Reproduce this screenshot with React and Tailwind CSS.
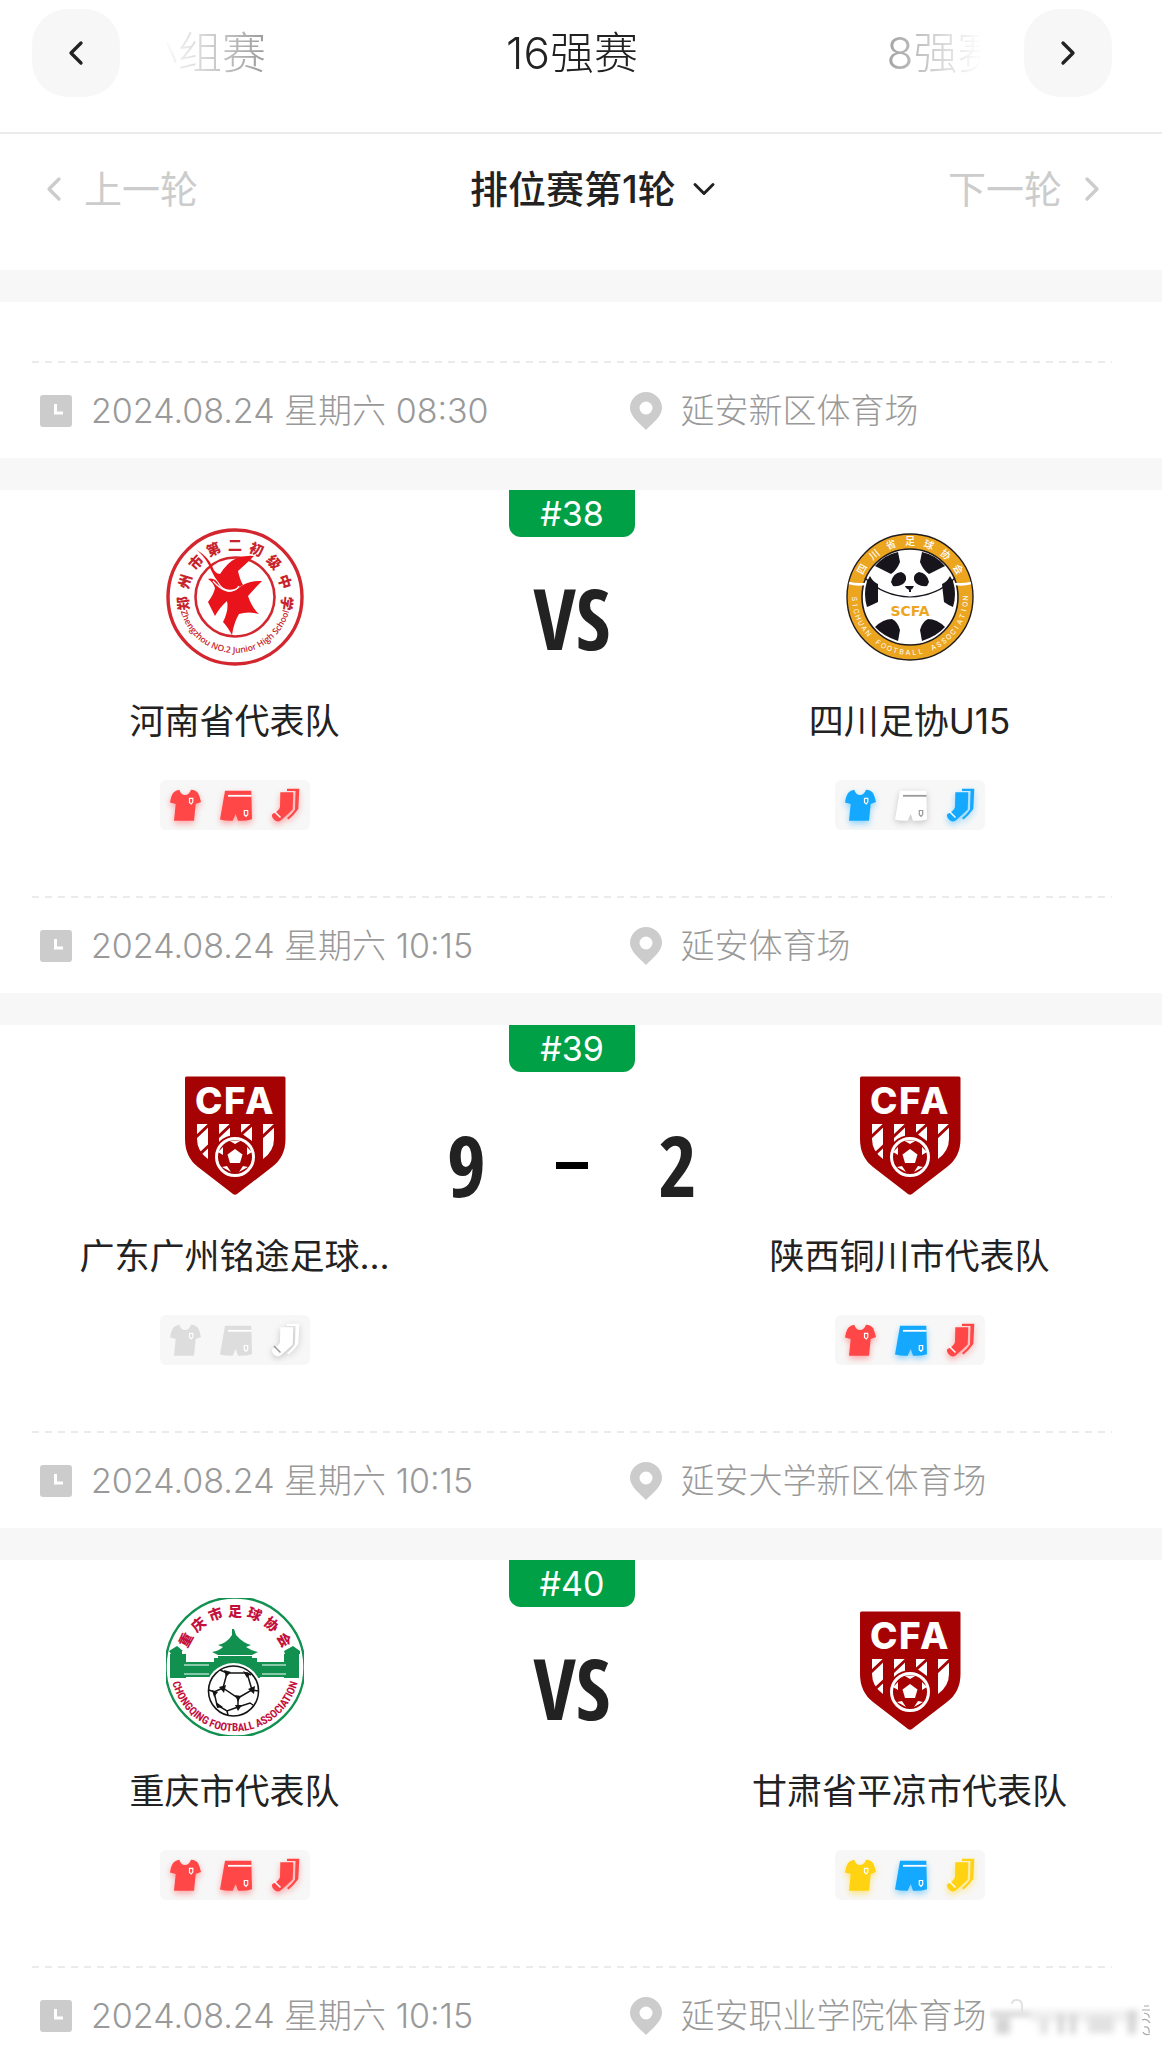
import React from 'react';
import { ChevronDown, ChevronLeft, ChevronRight } from 'lucide-react';

const KIT_COLORS = {
  red: { fill: '#ff4747', line: '#ffffff', shadow: 'drop-shadow-[0_3px_3px_rgba(255,71,71,0.45)]' },
  blue: { fill: '#14a9ff', line: '#ffffff', shadow: 'drop-shadow-[0_3px_3px_rgba(20,169,255,0.45)]' },
  yellow: { fill: '#ffd212', line: '#ffffff', shadow: 'drop-shadow-[0_3px_3px_rgba(255,210,18,0.5)]' },
  white: { fill: '#ffffff', line: '#9a9a9a', shadow: 'drop-shadow-[0_2px_3px_rgba(0,0,0,0.2)]' },
  gray: { fill: '#dddddd', line: '#ffffff', shadow: '' },
};

const MATCHES = [
  {
    no: '#38',
    home: { name: '河南省代表队', logo: 'henan', kit: ['red', 'red', 'red'] },
    away: { name: '四川足协U15', logo: 'sichuan', kit: ['blue', 'white', 'blue'] },
    time: '2024.08.24 星期六 10:15',
    venue: '延安体育场',
  },
  {
    no: '#39',
    home: { name: '广东广州铭途足球...', logo: 'cfa', kit: ['gray', 'gray', 'white'] },
    away: { name: '陕西铜川市代表队', logo: 'cfa', kit: ['red', 'blue', 'red'] },
    score: [9, 2],
    time: '2024.08.24 星期六 10:15',
    venue: '延安大学新区体育场',
  },
  {
    no: '#40',
    home: { name: '重庆市代表队', logo: 'chongqing', kit: ['red', 'red', 'red'] },
    away: { name: '甘肃省平凉市代表队', logo: 'cfa', kit: ['yellow', 'blue', 'yellow'] },
    time: '2024.08.24 星期六 10:15',
    venue: '延安职业学院体育场',
  },
];

// 沿圆弧逐字排列，bottom 表示文字在圆的下半部分
const ArcText = ({ text, radius, from, to, size, fill, weight = 400, bottom = false }) => {
  const chars = [...text];
  const step = (to - from) / (chars.length - 1);
  return chars.map((c, i) => (
    <text
      key={i}
      x="69"
      y={bottom ? 69 + radius : 69 - radius}
      transform={`rotate(${from + step * i} 69 69)`}
      textAnchor="middle"
      fontSize={size}
      fontWeight={weight}
      fill={fill}
    >
      {c}
    </text>
  ));
};

const HenanLogo = () => (
  <svg viewBox="0 0 138 138" className="size-full" role="img" aria-label="郑州市第二初级中学">
    <circle cx="69" cy="69" r="67" fill="#fff" stroke="#d3262e" strokeWidth="3.4" />
    <circle cx="69" cy="69" r="39.5" fill="none" stroke="#d3262e" strokeWidth="2.6" />
    <ArcText text="郑州市第二初级中学" radius={47} from={-97} to={97} size={14} weight={900} fill="#c8232b" />
    <path id="henan-arc" d="M13 69 A56 56 0 0 0 125 69" fill="none" />
    <text fontSize="8.6" fontWeight="600" fill="#c8232b" className="font-['Open_Sans',sans-serif]">
      <textPath href="#henan-arc" startOffset="50%" textAnchor="middle">Zhengzhou NO.2 Junior High School</textPath>
    </text>
    <g fill="#e8131b">
      <path d="M31 22 Q42 29 46 38 Q49 46 54 46 Q62 34 69 31 Q78 27 88 28 Q80 36 72 43 Q74 52 77 57 L69 61 Q58 64 53 55 Q48 49 45 42 Q41 31 31 22Z" />
      <path d="M42 51 Q49 49 53 57 Q60 67 70 62 Q81 52 96 53 Q88 61 82 68 Q86 80 93 86 Q82 83 73 86 Q68 94 66 107 Q61 98 57 94 Q63 82 61 73 Q54 79 49 88 Q45 80 42 74 Q48 66 49 60 Q47 54 42 51Z" />
    </g>
    <path d="M47 53 Q54 61 61 63 Q69 64 73 58" fill="none" stroke="#fff" strokeWidth="1.2" />
  </svg>
);

const SichuanLogo = () => (
  <svg viewBox="0 0 138 138" className="size-full" role="img" aria-label="四川省足球协会">
    <circle cx="69" cy="69" r="63" fill="#eca51f" stroke="#221c1c" strokeWidth="1.4" />
    <circle cx="69" cy="69" r="48" fill="#fff" stroke="#221c1c" strokeWidth="1.6" />
    <path d="M8 55 Q15 57 24 56 M130 55 Q123 57 114 56" fill="none" stroke="#fff" strokeWidth="2.6" />
    <ArcText text="四川省足球协会" radius={52} from={-60} to={60} size={10} weight={500} fill="#fff" />
    <ArcText text="SICHUAN" radius={58} from={88} to={49} size={7} fill="#fff" bottom />
    <ArcText text="FOOTBALL" radius={58} from={35} to={-11} size={7} fill="#fff" bottom />
    <ArcText text="ASSOCIATION" radius={58} from={-25} to={-89} size={7} fill="#fff" bottom />
    <g fill="#17141c">
      <path d="M34 38 Q43 27 57 24 L59 34 Q56 42 50 46Z" />
      <path d="M104 38 Q95 27 81 24 L79 34 Q82 42 88 46Z" />
      <path d="M26 53 Q28 50 29 48 Q32 54 37 56 L37 74 Q31 77 26 79 Q22 66 26 53Z" />
      <path d="M112 53 Q110 50 109 48 Q106 54 101 56 L103 74 Q107 77 112 79 Q116 66 112 53Z" />
      <path d="M34 99 Q42 91 51 91 Q57 94 59 102 L57 113 Q42 108 34 99Z" />
      <path d="M104 99 Q96 91 87 91 Q81 94 79 102 L81 113 Q96 108 104 99Z" />
      <path d="M50 54 Q52 45 60 44 Q66 46 65 52 Q62 59 52 58Z" />
      <path d="M88 54 Q86 45 78 44 Q72 46 73 52 Q76 59 86 58Z" />
      <path d="M64 58 H73 Q72 61 69 62 Q65 61 64 58Z M68 61 H70 V64 H68Z" />
    </g>
    <path d="M24 50 Q42 68 69 69 Q96 68 114 50" fill="none" stroke="#17141c" strokeWidth="1.2" />
    <text x="69" y="88" textAnchor="middle" fontSize="14" fontWeight="800" fill="#eca51f" className="font-['DejaVu_Sans',sans-serif]">
      SCFA
    </text>
  </svg>
);

const ChongqingLogo = () => (
  <svg viewBox="0 0 138 138" className="size-full" role="img" aria-label="重庆市足球协会">
    <circle cx="69" cy="69" r="69.5" fill="#fff" stroke="#119050" strokeWidth="2.4" />
    <ArcText text="重庆市足球协会" radius={51} from={-61} to={61} size={14} weight={900} fill="#c4103d" />
    <g fill="#119050">
      <path d="M66 31 H68 L70 37 Q77 45 85 47 L80 49 Q86 53 92 54 L86 57 V60 H52 V57 L46 54 Q53 53 57 49 L52 47 Q61 45 66 37Z" />
      <path d="M48 60 H91 V64 H94 V80 H45 V64 H48Z" />
      <path d="M11 48 L17 53 H16 V56 H20 V80 H4 V56 H5 L3 53Z" />
      <path d="M127 48 L134 53 V56 H133 V80 H118 V56 H119 L118 53Z" />
      <path d="M16 64 H46 V79 H16Z M92 64 H122 V79 H92Z" />
    </g>
    <path d="M18 67 H43 M18 76 H43 M96 67 H120 M96 76 H120 M50 57.5 H89" stroke="#fff" strokeWidth="1" />
    <circle cx="67.5" cy="93" r="28" fill="#fff" />
    <circle cx="67.5" cy="93" r="25" fill="#fff" stroke="#141414" strokeWidth="1.6" />
    <g fill="none" stroke="#141414" strokeWidth="1.5">
      <path d="M61 75 L81 75 L86 92 L72 100 L57 90Z" />
      <path d="M61 75 L54 72 M81 75 L85 77 M86 92 L92 93 M72 100 L72 109 M57 90 L48 94 L43 92" />
      <path d="M48 94 L51 107 L61 113 L72 109 L84 105 L87 107 M61 113 L62 117" />
    </g>
    <g fill="#141414">
      <path d="M58 72 L65 74 L60 79Z M77 73 L84 76 L81 80Z M82 91 L89 88 L88 96Z M69 97 L75 98 L72 104Z M53 89 L60 87 L58 95Z M46 92 L52 94 L48 99Z M50 104 L57 109 L51 110Z M69 107 L76 107 L72 113Z" />
    </g>
    <path id="cq-arc" d="M4.5 69 A64.5 64.5 0 0 0 133.5 69" fill="none" />
    <text fontSize="11" fontWeight="700" fill="#c4103d" className="font-['Liberation_Sans_Narrow','Roboto_Condensed','Liberation_Sans',sans-serif]">
      <textPath href="#cq-arc" startOffset="50%" textAnchor="middle">CHONGQING FOOTBALL ASSOCIATION</textPath>
    </text>
  </svg>
);

const CfaLogo = () => (
  <svg viewBox="0 0 138 138" className="size-full" role="img" aria-label="CFA">
    <path d="M20.5 13.5 H118 Q119.5 13.5 119.5 15 V76 Q119.5 94 106 104 L71 131 Q69 132.5 67 131 L32 104 Q19 94 19 76 V15 Q19 13.5 20.5 13.5Z" fill="#a50204" />
    <text x="29 58 79" y="51" fontSize="37" fontWeight="800" fill="#fff">CFA</text>
    <g fill="#fff">
      <path d="M31 61 H42 V96 Q31 88 31 76Z" />
      <path d="M53 61 H64 V74 L53 82Z" />
      <path d="M75 61 H86 V78 L75 70Z" />
      <path d="M97 61 H108 V76 Q108 88 97 96Z" />
    </g>
    <path d="M29 75 L48 57 M34 91 L70 57 M69 77 L91 57 M94 76 L112 59" stroke="#a50204" strokeWidth="3" />
    <circle cx="69" cy="94" r="22" fill="#a50204" />
    <circle cx="69" cy="94" r="18.5" fill="none" stroke="#fff" strokeWidth="3" />
    <path d="M69 86 L76.5 91.5 L74 100 H64 L61.5 91.5Z" fill="#fff" />
    <path d="M63 77.5 H75 L69 81Z M52 89 L57 84 L57 92Z M86 89 L81 84 L81 92Z M56 104 L61 103 L65 109Z M82 104 L77 103 L73 109Z" fill="#fff" />
  </svg>
);

const LOGOS = {
  henan: HenanLogo,
  sichuan: SichuanLogo,
  chongqing: ChongqingLogo,
  cfa: CfaLogo,
};

const Shirt = ({ color }) => {
  const { fill, line, shadow } = KIT_COLORS[color];
  return (
    <svg viewBox="0 0 40 40" className={`size-10 ${shadow}`} aria-hidden="true">
      <path d="M14.3 4.7 Q16 10 20 10 Q24 10 26 4.7 Q31 5 33 8 Q35 12 36 17 L30.7 19 L29 35.7 H9 L10.7 19 L5 17.5 Q6 11 8.3 7.8 Q10.5 5 14.3 4.7Z" fill={fill} />
      <path d="M24.5 13.3 H27.8 V17 L26.2 19 L24.5 17.5Z" fill="none" stroke={line} strokeWidth="1.2" />
    </svg>
  );
};

const Shorts = ({ color }) => {
  const { fill, line, shadow } = KIT_COLORS[color];
  return (
    <svg viewBox="0 0 40 40" className={`size-10 ${shadow}`} aria-hidden="true">
      <path d="M10 5.7 H36.3 L37 34.3 Q30 36.3 23 35.7 L20.7 29 L17.7 35.7 Q11 36 5 34.5Z" fill={fill} />
      <path d="M13 10.8 H36.5" stroke={line} strokeWidth="1.8" />
      <path d="M29.3 25.5 H32.7 V29.5 L31 31.3 L29.3 29.8Z" fill="none" stroke={line} strokeWidth="1.2" />
    </svg>
  );
};

const Socks = ({ color }) => {
  const { fill, line, shadow } = KIT_COLORS[color];
  return (
    <svg viewBox="0 0 40 40" className={`size-10 ${shadow}`} aria-hidden="true">
      <path d="M22 3.7 H34.3 L33.3 24 Q29 30 23.5 34.5 L22 33 Q27 29 30 24.5 L30.5 6 H22Z" fill={fill} />
      <path d="M15.3 7.3 H28.3 L27.7 24.5 Q21 31 15 36 Q11 37.5 8.5 34 Q6 31 7.5 29 Q14 26 15 22Z" fill={fill} />
      <path d="M9 26 L15.5 32.5" stroke={line} strokeWidth="1.5" />
    </svg>
  );
};

const ClockIcon = () => (
  <svg viewBox="0 0 32 32" className="size-8 shrink-0" aria-hidden="true">
    <rect width="32" height="32" rx="3" fill="#cccccc" />
    <path d="M15.5 9 V18 H23" fill="none" stroke="#fff" strokeWidth="3" />
  </svg>
);

const PinIcon = () => (
  <svg viewBox="0 0 32 38" className="h-[38px] w-8 shrink-0" aria-hidden="true">
    <path fillRule="evenodd" d="M16 0 A16 16 0 0 1 32 16 C32 24 23 31 16 38 C9 31 0 24 0 16 A16 16 0 0 1 16 0Z M16 9.5 A6.5 6.5 0 1 0 16 22.5 A6.5 6.5 0 1 0 16 9.5Z" fill="#cccccc" />
  </svg>
);

const Team = ({ team }) => {
  const Logo = LOGOS[team.logo];
  const [shirt, shorts, socks] = team.kit;
  return (
    <div className="flex min-w-0 flex-col items-center pt-[38px]">
      <div className="size-[138px]">
        <Logo />
      </div>
      <p className="mt-8 w-full truncate text-center text-[35px] leading-[46px] text-[#222]">{team.name}</p>
      <div className="mt-9 flex gap-2.5 rounded-md bg-[#f7f7f7] p-[5px]">
        <Shirt color={shirt} />
        <Shorts color={shorts} />
        <Socks color={socks} />
      </div>
    </div>
  );
};

const MatchFooter = ({ time, venue }) => (
  <div className="mr-[50px] ml-8">
    {/* 虚线分隔 */}
    <div className="h-0.5 bg-[repeating-linear-gradient(90deg,#ebebeb_0_7px,transparent_7px_13px)]" />
    <div className="flex h-[95px] items-center pl-2 text-[34px] font-light text-[#999]">
      <div className="flex w-[55%] items-center gap-[19px] whitespace-nowrap">
        <ClockIcon />
        <time>{time}</time>
      </div>
      <div className="flex items-center gap-[19px] whitespace-nowrap">
        <PinIcon />
        <span>{venue}</span>
      </div>
    </div>
  </div>
);

const SCORE_CLASS =
  "flex w-full items-center font-['Noto_Sans_ExtraCondensed','Open_Sans_Condensed','Roboto_Condensed','Liberation_Sans_Narrow','Liberation_Sans',sans-serif] text-[84px] leading-[90px] font-bold text-[#222]";

const MatchCard = ({ match }) => (
  <article className="bg-white">
    <div className="mr-[50px] ml-8 grid h-[406px] grid-cols-[3fr_2fr_3fr]">
      <Team team={match.home} />
      <div className="flex flex-col items-center">
        <span className="h-[47px] w-[126px] rounded-b-xl bg-[#00a046] text-center text-[34px] leading-[47px] text-white">
          {match.no}
        </span>
        {match.score ? (
          <div className={`mt-12 justify-between px-2.5 ${SCORE_CLASS}`}>
            <span>{match.score[0]}</span>
            <span className="h-[7px] w-8 bg-black" />
            <span>{match.score[1]}</span>
          </div>
        ) : (
          <div className={`mt-9 justify-center ${SCORE_CLASS}`}>VS</div>
        )}
      </div>
      <Team team={match.away} />
    </div>
    <MatchFooter time={match.time} venue={match.venue} />
  </article>
);

const StageBar = () => (
  <header className="flex h-[134px] items-start border-b-2 border-[#ebebeb] bg-white pt-[9px] pr-[50px] pl-8">
    <button type="button" aria-label="上一阶段" className="flex size-[88px] shrink-0 items-center justify-center rounded-[36px] bg-[#f7f7f7] text-[#222]">
      <ChevronLeft size={40} strokeWidth={2} />
    </button>
    <nav className="mx-[42px] flex h-[88px] min-w-0 flex-1 items-center justify-center overflow-hidden text-[44px] font-light [mask-image:linear-gradient(90deg,transparent,#000_120px,#000_calc(100%-120px),transparent)]">
      <button type="button" className="w-[372px] shrink-0 text-[#8a8a8a]">小组赛</button>
      <button type="button" className="w-[372px] shrink-0 text-[#222]">16强赛</button>
      <button type="button" className="w-[372px] shrink-0 text-[#8a8a8a]">8强赛</button>
    </nav>
    <button type="button" aria-label="下一阶段" className="flex size-[88px] shrink-0 items-center justify-center rounded-[36px] bg-[#f7f7f7] text-[#222]">
      <ChevronRight size={40} strokeWidth={2} />
    </button>
  </header>
);

const RoundBar = () => (
  <div className="flex h-[136px] items-start justify-between bg-white pt-7 pr-[50px] pl-[34px] text-[38px] leading-[54px]">
    <button type="button" className="flex items-center gap-2.5 text-[#ccc]">
      <ChevronLeft size={40} strokeWidth={2} />
      上一轮
    </button>
    <div className="relative flex items-center text-[#222]">
      <select aria-label="选择轮次" className="appearance-none bg-transparent px-12 font-medium outline-none">
        <option>排位赛第1轮</option>
      </select>
      <ChevronDown size={36} strokeWidth={2} className="pointer-events-none absolute right-0.5" />
    </div>
    <button type="button" className="flex items-center gap-2.5 text-[#ccc]">
      下一轮
      <ChevronRight size={40} strokeWidth={2} />
    </button>
  </div>
);

const Watermark = () => (
  <svg viewBox="0 0 172 50" className="pointer-events-none absolute right-0 bottom-0 h-[50px] w-[172px]" aria-hidden="true">
    <g className="blur-[3px]">
      <rect x="0" y="14" width="46" height="4" fill="#c4c4c4" />
      <rect x="40" y="12" width="110" height="12" fill="#f0f0f0" />
      <rect x="6" y="20" width="14" height="16" fill="#d4d4d4" />
      <rect x="50" y="20" width="8" height="16" fill="#e2e2e2" />
      <rect x="68" y="16" width="6" height="20" fill="#d4d4d4" />
      <rect x="80" y="16" width="6" height="20" fill="#d4d4d4" />
      <rect x="98" y="18" width="26" height="17" fill="#e2e2e2" />
      <rect x="138" y="12" width="8" height="24" fill="#d4d4d4" />
    </g>
    <path d="M22 6 Q22 2 27 2 Q32 2 32 8 V14" fill="none" stroke="#e2e2e2" strokeWidth="2" />
    <path d="M154 8 H159 M152 12 H160 M154 15 Q160 16 159 20 M152 22 Q157 20 160 25 M154 29 Q160 28 159 35 M153 34 Q155 38 160 36" fill="none" stroke="#aaa" strokeWidth="1.2" />
  </svg>
);

const App = () => (
  <div className="relative h-screen overflow-hidden bg-[#f7f7f7] font-['Inter','Noto_Sans_CJK_SC',sans-serif]">
    <StageBar />
    <RoundBar />
    <main className="mt-8 flex flex-col gap-8">
      <div className="bg-white pt-[59px]">
        <MatchFooter time="2024.08.24 星期六 08:30" venue="延安新区体育场" />
      </div>
      {MATCHES.map((match) => (
        <MatchCard key={match.no} match={match} />
      ))}
    </main>
    <Watermark />
  </div>
);

export default App;
